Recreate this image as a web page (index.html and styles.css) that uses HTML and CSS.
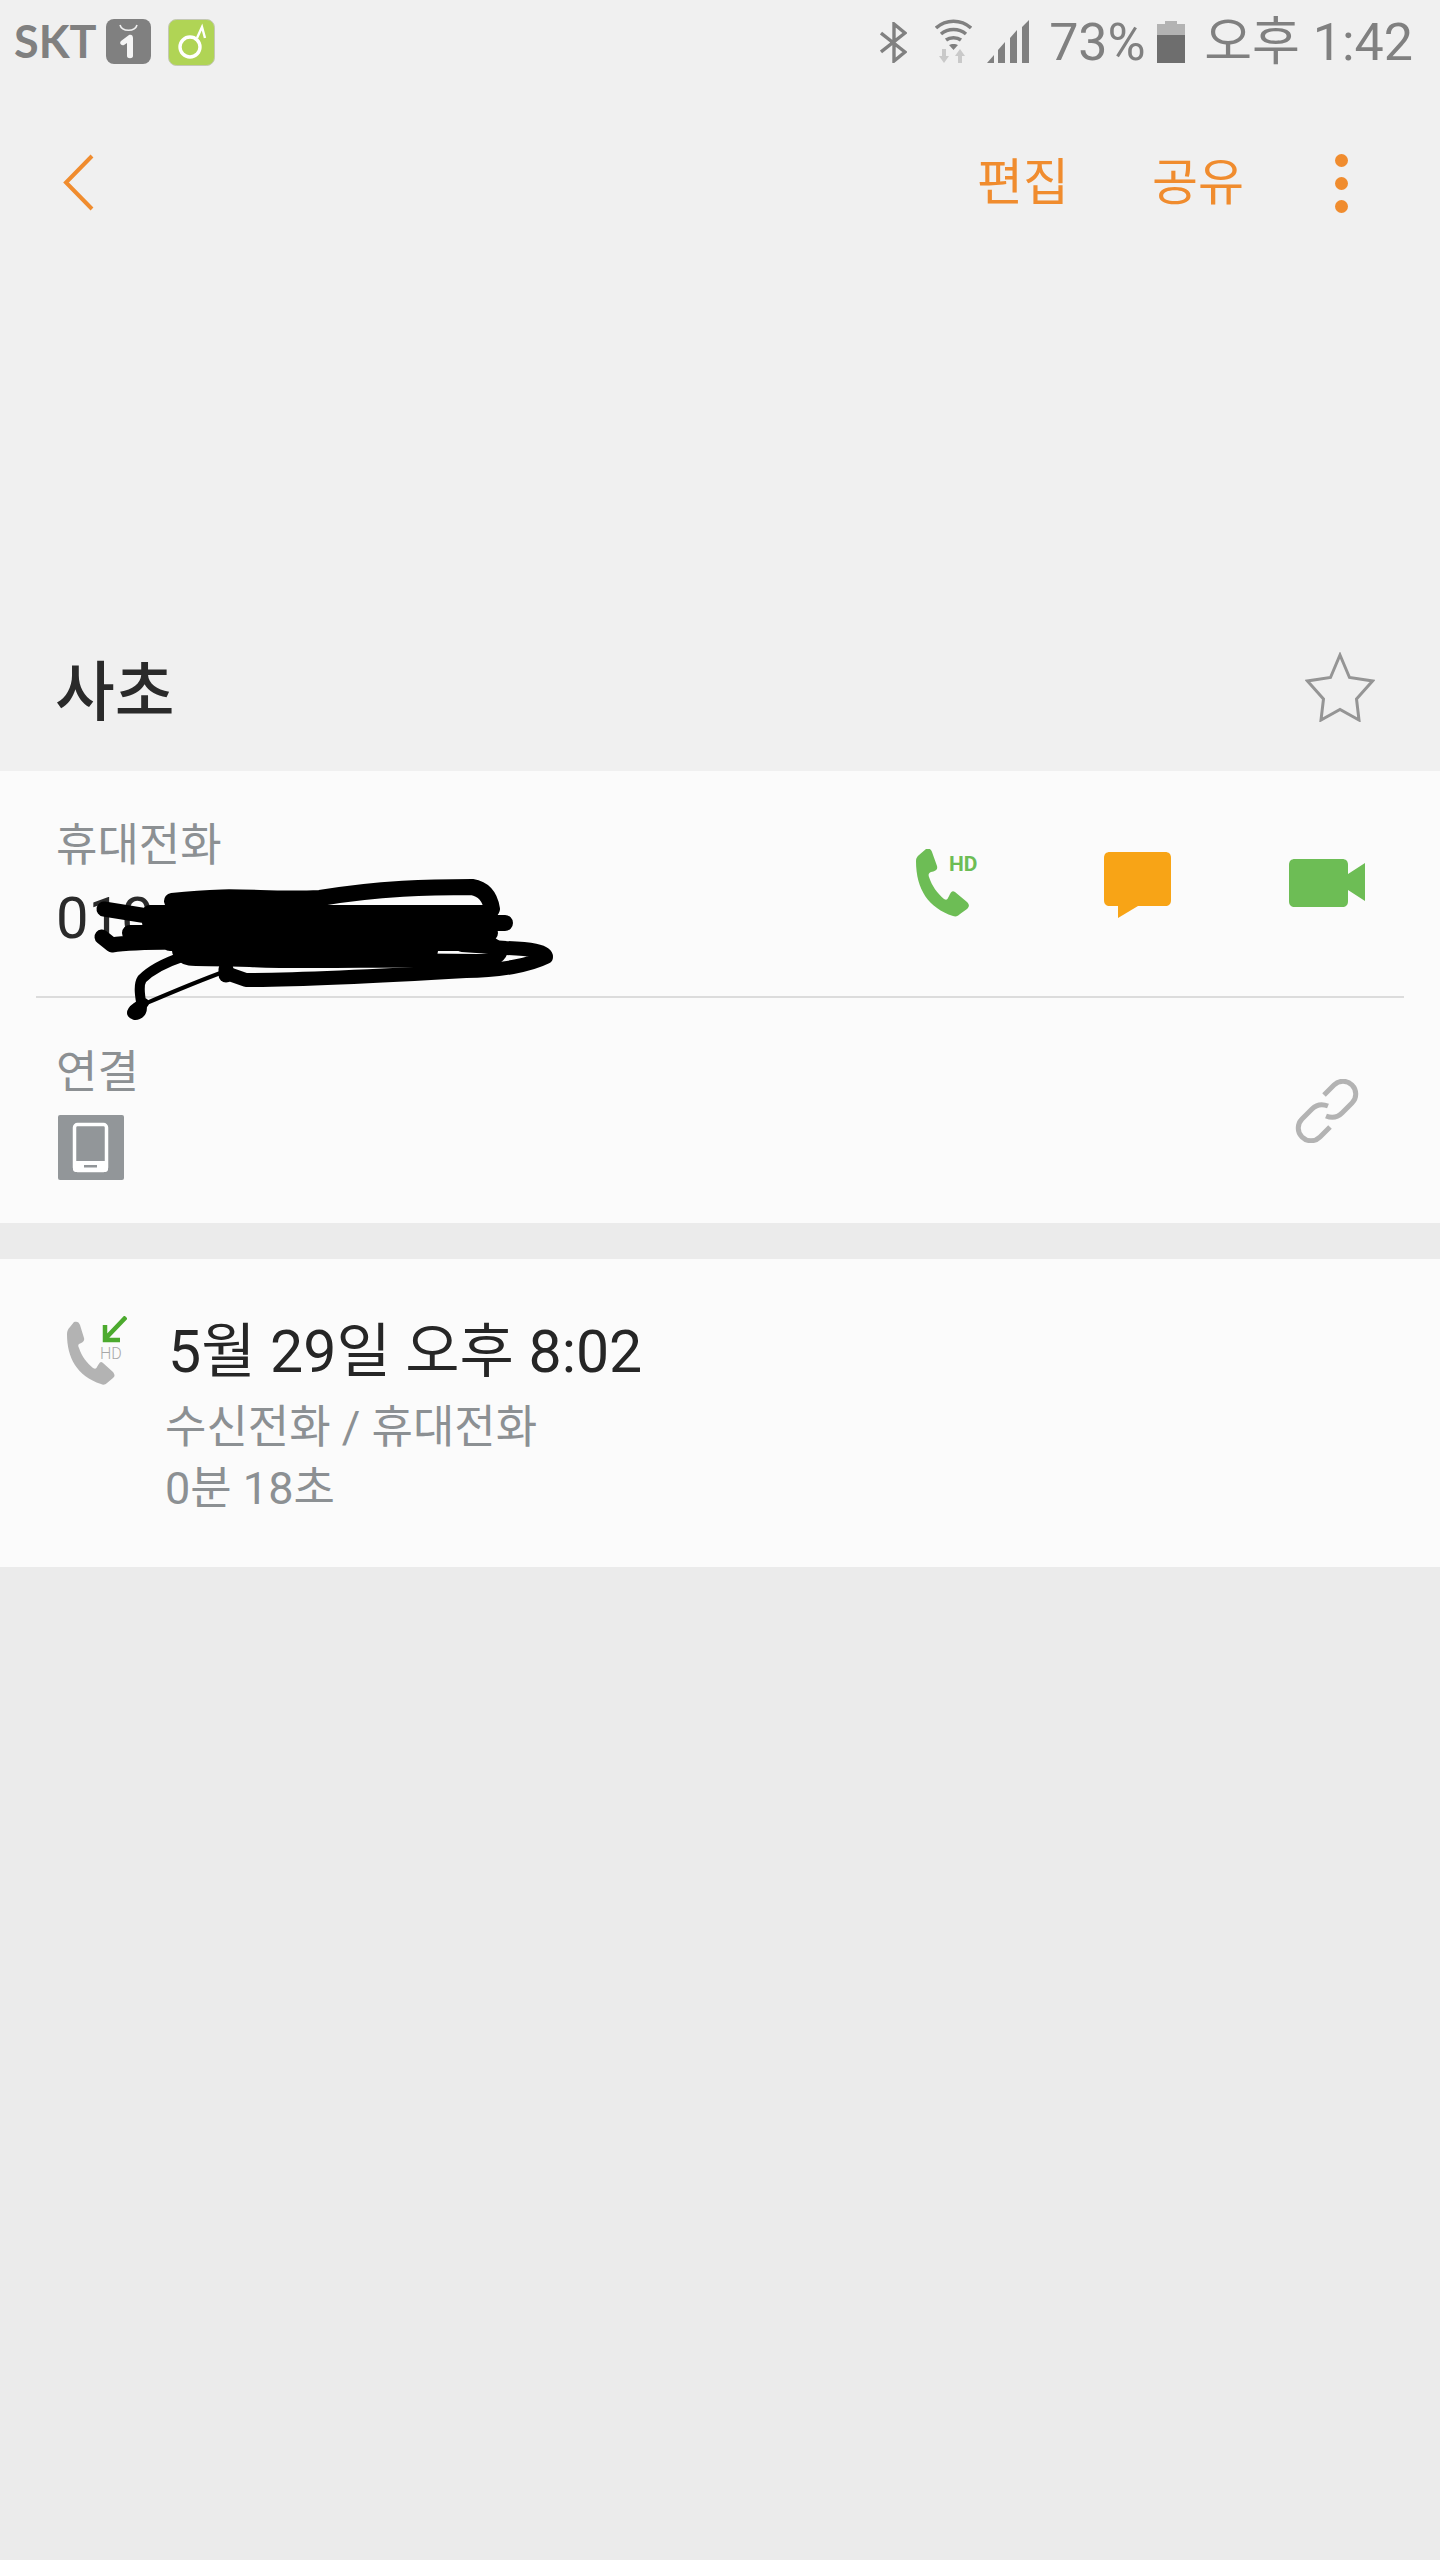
FILE: index.html
```html
<!DOCTYPE html>
<html lang="ko">
<head>
<meta charset="utf-8">
<title>사초</title>
<link rel="stylesheet" href="styles.css">
</head>
<body>
<div class="page">
  <header class="top">
    <div class="status">
      <span class="skt">SKT</span>
      <svg class="badge-one" viewBox="0 0 45 45"><rect width="45" height="45" rx="8" fill="#808080"/><path d="M14 6c2 7 15 7 17 0" fill="none" stroke="#f0f0f0" stroke-width="1.6"/><path d="M15 22l8-6c2-1 4 0 4 3v18c0 3-6 3-6 0V24l-3 2c-3 1-5-2-3-4z" fill="#f5f5f5"/></svg>
      <svg class="badge-two" viewBox="0 0 47 47"><rect x=".5" y=".5" width="46" height="46" rx="8" fill="#b0d455" stroke="#c4c8b4"/><circle cx="22" cy="28" r="10" fill="none" stroke="#fff" stroke-width="3.4"/><path d="M29 19l5-11 3 11" fill="none" stroke="#fff" stroke-width="2.4"/></svg>
      <div class="status-right">
        <svg class="bt" viewBox="0 0 27 41"><path d="M1 11l24 19-11 9V2l11 9L1 30" fill="none" stroke="#808080" stroke-width="3.4"/></svg>
        <svg class="wifi" viewBox="0 0 37 44"><path d="M1 9c10-9 25-9 35 0M6 15c7-6 18-6 25 0M11 21c4-3 11-3 15 0" fill="none" stroke="#808080" stroke-width="3.500"/><path d="M14 26c2-1.500 7-1.500 9 0l-4.500 5z" fill="#808080"/><path d="M9 44l-5-7h3v-7h4v7h3zM25 30l5 7h-3v7h-4v-7h-3z" fill="#c9c9c9"/></svg>
        <svg class="signal" viewBox="0 0 42 43"><path d="M0 43l7-8v8zM11 43V30l7-8v21zM23 43V18l7-8v33zM35 43V7l7-7v43z" fill="#808080"/></svg>
        <span class="pct">73%</span>
        <svg class="battery" viewBox="0 0 28 42"><path d="M8 0h12v3h8v11H0V3h8z" fill="#b3b3b3"/><rect y="14" width="28" height="28" fill="#6e6e6e"/></svg>
        <span class="clock">오후 1:42</span>
      </div>
    </div>
    <nav class="nav">
      <svg class="back" viewBox="0 0 32 57"><path d="M30 2L4 28.500 30 55" fill="none" stroke="#f08c2e" stroke-width="4"/></svg>
      <div class="nav-actions">
        <span class="edit">편집</span>
        <span class="share">공유</span>
        <div class="dots"><i></i><i></i><i></i></div>
      </div>
    </nav>
    <div class="name-row">
      <h1 class="name">사초</h1>
      <svg class="star" viewBox="0 0 70 70"><path d="M35 3l9.500 22.500 23 3.500-16 18 2.500 21L35 57.500 16 68l2.500-21-16-18 23-3.500z" fill="none" stroke="#959595" stroke-width="3"/></svg>
    </div>
  </header>

  <section class="card contact">
    <div class="row phone-row">
      <div class="row-text">
        <div class="label">휴대전화</div>
        <div class="number">010</div>
      </div>
      <div class="actions">
        <div class="call">
          <svg class="call-icon" viewBox="0 0 58 68"><path d="M10 0c3-1 5 0 6 3l5 14c1 4-2 5-6 6-2 1-3 2-2 5 3 9 8 16 15 22 2 1 3 1 4-1 2-3 3-9 7-6l12 10c3 3 2 5 0 7l-7 5c-2 2-4 3-7 2C13 59 0 41 0 12c0-3 1-4 3-6z" fill="#6dbd55"/></svg>
          <span class="hd">HD</span>
        </div>
        <svg class="msg" viewBox="0 0 67 66"><path d="M6 0h55c4 0 6 2 6 6v42c0 4-2 6-6 6H34L14 66V54H6c-4 0-6-2-6-6V6c0-4 2-6 6-6z" fill="#f8a416"/></svg>
        <svg class="video" viewBox="0 0 76 48"><path d="M6 0h47c4 0 6 2 6 6v9l17-11v38L59 31v11c0 4-2 6-6 6H6c-4 0-6-2-6-6V6c0-4 2-6 6-6z" fill="#6dbd55"/></svg>
      </div>
    </div>
    <div class="divider"></div>
    <div class="row link-row">
      <div class="row-text">
        <div class="label">연결</div>
        <svg class="device" viewBox="0 0 66 65"><rect width="66" height="65" rx="2" fill="#929699"/><rect x="16.500" y="9.500" width="32" height="46" rx="3" fill="none" stroke="#fff" stroke-width="3.500"/><rect x="15" y="46" width="35" height="11" rx="3" fill="#fff"/><rect x="26" y="50" width="13" height="2.500" fill="#929699"/></svg>
      </div>
      <svg class="chain" viewBox="0 0 64 64"><path d="M29 16l10-10c5-5 13-5 18 0s5 13 0 18L47 34c-5 5-11 5-16 3M35 48L25 58c-5 5-13 5-18 0s-5-13 0-18l10-10c5-5 11-5 16-3" fill="none" stroke="#b3b3b3" stroke-width="5"/></svg>
    </div>
  </section>

  <section class="card log">
    <div class="log-icon">
      <svg class="log-phone" viewBox="0 0 62 70"><path d="M9 6c3-1 5 0 6 3l4 13c1 3-2 5-5 6-1 1-1 2 0 4 3 9 8 15 14 20 2 1 3 1 4-1 2-3 3-7 6-4l10 9c2 3 2 4 0 6l-6 5c-2 2-4 2-6 1C12 60 2 42 2 18c0-3 1-5 3-7z" fill="#b3b3b3"/><path d="M61 1L40 23M40 9v15h15" fill="none" stroke="#4caa2e" stroke-width="4.500"/><text class="log-hd" x="35" y="43">HD</text></svg>
    </div>
    <div class="log-text">
      <div class="log-title">5월 29일 오후 8:02</div>
      <div class="log-sub">수신전화 / 휴대전화</div>
      <div class="log-sub">0분 18초</div>
    </div>
  </section>

  <svg class="scribble" viewBox="0 0 480 150">
    <g fill="none" stroke="#000" stroke-linecap="round" stroke-linejoin="round">
      <path d="M82 28C150 20 170 28 230 25C290 15 340 14 382 14C394 16 400 24 402 36" stroke-width="16"/>
      <path d="M14 36L76 46M12 64L22 72C50 68 90 70 130 68" stroke-width="15"/>
      <path d="M60 40H400M60 50H415M40 60H400M80 70H380M90 78H340" stroke-width="16"/>
      <path d="M372 62C395 66 408 72 410 80C406 86 400 88 388 88C300 86 220 90 160 87C108 85 94 88 94 82" stroke-width="14"/>
      <path d="M136 100L156 107C210 107 290 103 376 98C410 98 440 92 456 84C456 78 440 76 416 75L372 72" stroke-width="14"/>
      <path d="M136 96L136 102" stroke-width="15"/>
      <path d="M92 84C80 88 62 96 52 106C48 112 50 124 52 134C52 142 44 144 42 140C42 136 50 132 54 130" stroke-width="10"/>
      <path d="M136 98C108 108 80 120 52 132" stroke-width="4"/>
    </g>
  </svg>
</div>
</body>
</html>
```

FILE: styles.css
```css
* { box-sizing: border-box; }
html, body { margin: 0; padding: 0; }
body {
  background: #ebebeb;
  font-family: Roboto, "Noto Sans CJK KR", sans-serif;
  color: #2a2a2a;
}
.page { position: relative; width: 1440px; height: 2560px; background: #ebebeb; }

.top { background: #f0f0f0; height: 771px; display: flex; flex-direction: column; }

.status { height: 84px; display: flex; align-items: flex-start; padding: 19px 27px 0 14px; }
.skt { font-family: Lato, sans-serif; font-weight: 700; font-size: 45px; line-height: 44px; color: #808080; width: 92px; }
.badge-one { width: 45px; height: 45px; }
.badge-two { width: 47px; height: 47px; margin-left: 17px; }
.status-right { margin-left: auto; display: flex; align-items: flex-start; }
.bt { width: 27px; height: 41px; margin-top: 3px; }
.wifi { width: 37px; height: 44px; margin-left: 28px; }
.signal { width: 42px; height: 43px; margin-left: 15px; margin-top: 1px; }
.pct { font-size: 52px; font-weight: 400; line-height: 48px; color: #808080; margin-left: 20px; width: 108px; }
.battery { width: 28px; height: 42px; margin-top: 2px; }
.clock { font-size: 52px; font-weight: 400; line-height: 48px; color: #808080; margin-left: 19px; white-space: nowrap; }

.nav { height: 150px; display: flex; align-items: flex-start; padding: 70px 0 0 62px; position: relative; }
.back { width: 32px; height: 57px; }
.nav-actions { margin-left: auto; display: flex; align-items: flex-start; padding-right: 92px; }
.edit, .share { font-size: 50px; line-height: 52px; color: #f08c2e; margin-top: 3px; }
.share { margin-left: 83px; }
.dots { margin-left: 91px; margin-top: 0; display: flex; flex-direction: column; gap: 10px; }
.dots i { display: block; width: 13px; height: 13px; border-radius: 50%; background: #f08c2e; }

.name-row { flex: 1; display: flex; align-items: flex-end; padding: 0 66px 45px 55px; justify-content: space-between; }
.name { margin: 0; font-size: 65px; line-height: 66px; font-weight: 500; color: #2a2a2a; }
.star { width: 70px; height: 70px; margin-bottom: 4px; margin-right: -1px; }

.card { background: #fbfbfb; }
.contact { height: 452px; display: flex; flex-direction: column; }
.row { display: flex; padding-left: 56px; position: relative; }
.phone-row { height: 225px; padding-top: 47px; }
.row-text { display: flex; flex-direction: column; }
.label { font-size: 45px; line-height: 56px; color: #8c9093; }
.number { font-size: 58px; line-height: 66px; margin-top: 11px; color: #2a2a2a; }
.actions { position: absolute; top: 78px; left: 916px; width: 449px; display: flex; align-items: flex-start; }
.call { position: relative; width: 62px; height: 68px; }
.call-icon { width: 58px; height: 68px; display: block; }
.hd { position: absolute; left: 33px; top: 3px; font-size: 21px; line-height: 24px; font-weight: 700; color: #6dbd55; }
.msg { width: 67px; height: 66px; margin-left: 126px; margin-top: 3px; }
.video { width: 76px; height: 48px; margin-left: auto; margin-top: 10px; }
.divider { height: 2px; background: #dcdcdc; margin: 0 36px; }
.link-row { flex: 1; padding-top: 47px; justify-content: space-between; padding-right: 81px; }
.device { width: 66px; height: 65px; margin-top: 14px; margin-left: 2px; }
.chain { width: 64px; height: 64px; margin-top: 34px; }

.log { margin-top: 36px; height: 308px; display: flex; padding: 59px 0 0 65px; }
.log-icon { width: 103px; }
.log-phone { width: 62px; height: 70px; display: block; margin-top: -2px; }
.log-hd { font-family: Roboto, sans-serif; font-size: 16px; font-weight: 300; fill: #a8a8a8; }
.log-title { font-size: 59px; line-height: 68px; color: #262626; }
.log-sub { font-size: 45px; line-height: 61px; color: #8c9093; margin-left: -3px; }
.log-title + .log-sub { margin-top: 11px; }

.scribble { position: absolute; left: 90px; top: 873px; width: 480px; height: 150px; }
```
